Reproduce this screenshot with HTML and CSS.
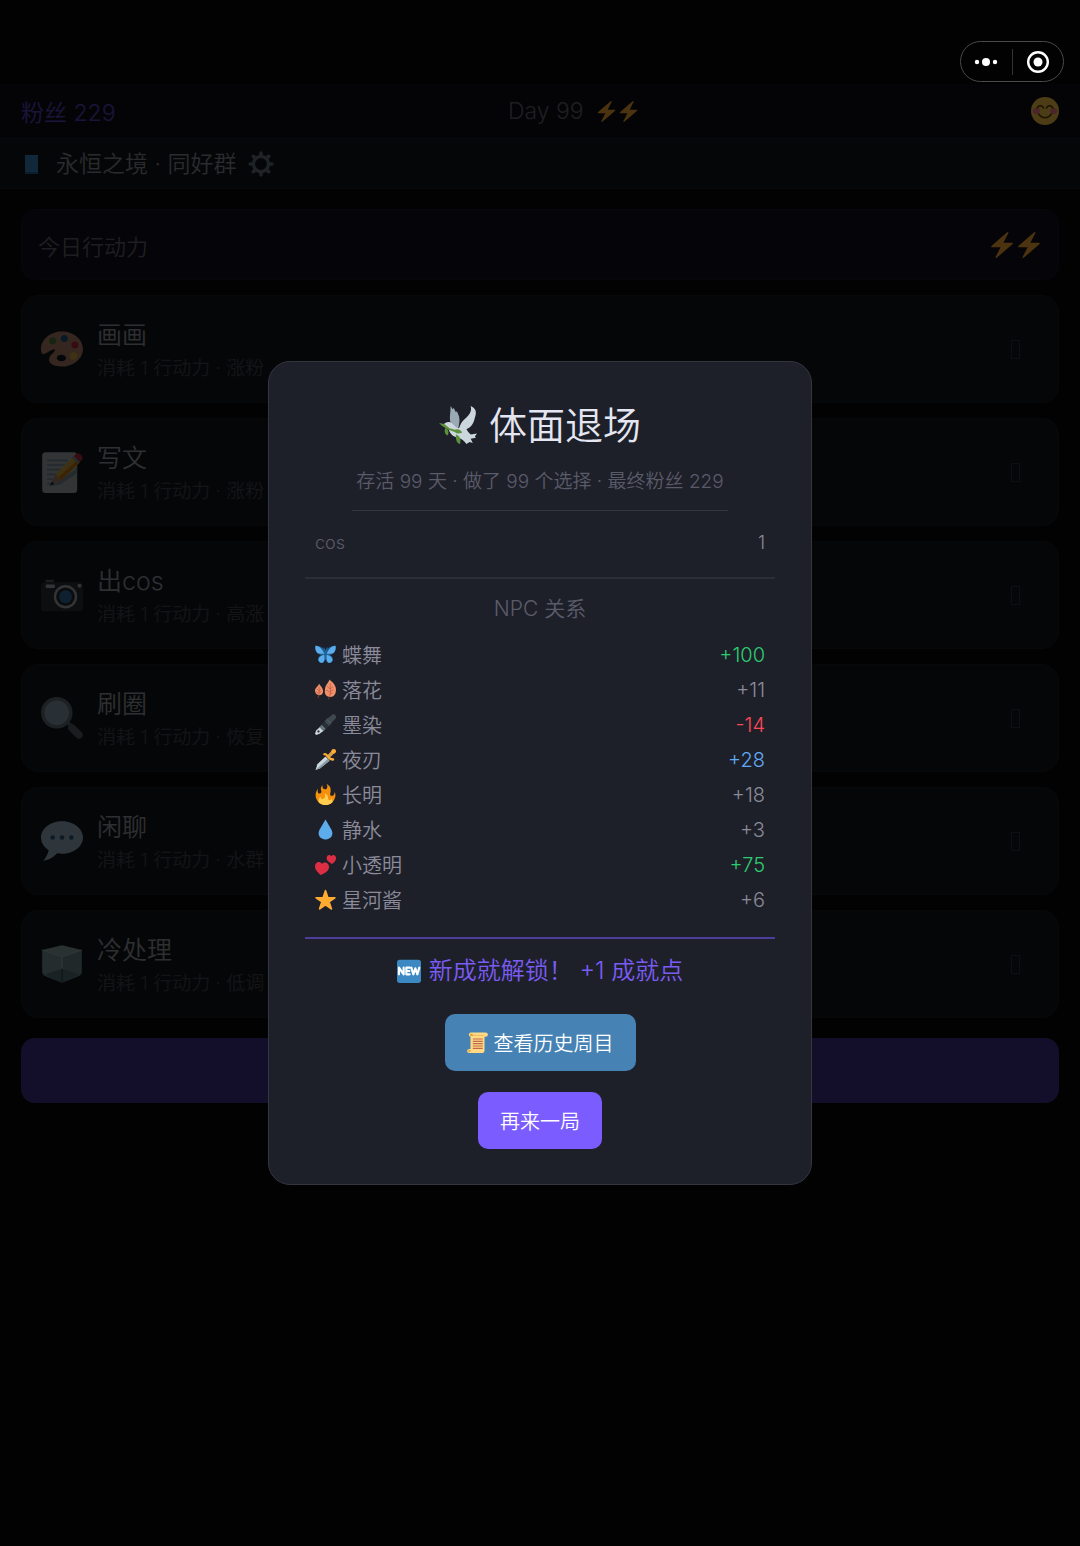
FILE: index.html
```html
<!DOCTYPE html>
<html lang="zh-CN">
<head>
<meta charset="utf-8">
<meta name="viewport" content="width=device-width, initial-scale=1">
<title>体面退场</title>
<link rel="stylesheet" href="styles.css">
</head>
<body>
<svg class="sprite" aria-hidden="true">
  <symbol id="bolt" viewBox="0 0 36 36"><path fill="#ffac33" d="M32.938 15.651C32.792 15.26 32.418 15 32 15H19.925L26.89 1.458c.219-.426.106-.947-.271-1.243C26.437.071 26.218 0 26 0c-.233 0-.466.082-.653.243L18 6.588 3.347 19.243c-.316.273-.43.714-.284 1.105S3.582 21 4 21h12.075L9.11 34.542c-.219.426-.106.947.271 1.243.182.144.401.215.619.215.233 0 .466-.082.653-.243L18 29.412l14.653-12.655c.317-.273.43-.714.285-1.106z"/></symbol>
  <symbol id="smile" viewBox="0 0 36 36"><circle cx="18" cy="18" r="18" fill="#ffcc4d"/><ellipse cx="7" cy="18" rx="4.500" ry="4" fill="#ff7892"/><ellipse cx="29" cy="18" rx="4.500" ry="4" fill="#ff7892"/><path d="M8 14c2-4 6-4 8 0M20 14c2-4 6-4 8 0M10 22c4 6 12 6 16 0" fill="none" stroke="#664500" stroke-width="2.200" stroke-linecap="round"/></symbol>
  <symbol id="gear" viewBox="0 0 36 36"><g fill="none" stroke="#66757f"><circle cx="18" cy="18" r="10.500" stroke-width="4.500"/><path stroke-width="5" stroke-linecap="round" d="M18 3v4M18 29v4M3 18h4M29 18h4M7.400 7.400l2.800 2.800M25.800 25.800l2.800 2.800M7.400 28.600l2.800-2.800M25.800 10.200l2.800-2.800"/></g></symbol>
  <symbol id="book" viewBox="0 0 24 24"><path fill="#3b88c3" d="M5 3h13v19H5z"/><path fill="#226699" d="M5 20h13v2H5z"/></symbol>
  <symbol id="palette" viewBox="0 0 36 36"><path fill="#d99e82" d="M18 3C8 3 0 10 0 18c0 2 .400 3.600 1.500 4.200C3.500 23 8 19 11 18.300c1.500-.300 1 1.500-.500 3-2 2-3.700 3.500-3.600 6.200C7.100 31 11.500 33 18 33c10 0 18-7 18-15S28 3 18 3zm-.500 25.600c-2.300 0-4-1.300-4-2.800 0-1.600 1.700-2.800 4-2.800s4 1.200 4 2.800c0 1.500-1.700 2.800-4 2.800z"/><circle cx="10" cy="11" r="3" fill="#5c913b"/><circle cx="20" cy="9" r="3" fill="#226699"/><circle cx="29" cy="14.500" r="3" fill="#dd2e44"/><circle cx="28" cy="24" r="3.200" fill="#ffcc4d"/></symbol>
  <symbol id="memo" viewBox="0 0 36 36"><rect x="1" y="1" width="30" height="35" rx="3" fill="#ccd6dd"/><path stroke="#88a9bf" stroke-width="1.500" d="M5 8h18M5 12h16M5 16h13M5 20h9M5 24h6M5 28h4"/><path fill="#99aab5" d="M9 30l19-13 3-3v5L16 29z"/><path fill="#ffcc4d" d="M12.500 20L27.500 5l5.500 5-16 15z"/><path fill="#f4900c" d="M15 22.500L31 8l2 2-16 15z"/><path fill="#d99e82" d="M12.500 20L8 29.500 17 25z"/><path fill="#292f33" d="M9.500 26L7.500 30l4-1.700z"/><path fill="#99aab5" d="M26.500 6l1.800-1.700 5.200 5L32 11z"/><path fill="#dd2e44" d="M28.300 4.300l2-2c2-1.500 6.500 2.500 5 5l-1.800 2z"/></symbol>
  <symbol id="camera" viewBox="0 0 36 36"><rect y="7" width="36" height="25" rx="3" fill="#31373d"/><path fill="#66757f" d="M4 5h7v2H4z"/><rect x="4" y="9" width="8" height="3" rx="1" fill="#ccd6dd"/><circle cx="33" cy="10" r="1.700" fill="#ccd6dd"/><circle cx="21" cy="19.500" r="10" fill="#ccd6dd"/><circle cx="21" cy="19.500" r="8" fill="#292f33"/><circle cx="21" cy="19.500" r="5.500" fill="#3b88c3"/></symbol>
  <symbol id="search" viewBox="0 0 36 36"><path stroke="#66757f" stroke-width="3" d="M22 21l4 4"/><path stroke="#66757f" stroke-width="6.500" stroke-linecap="round" d="M26.500 26.500l6 6"/><circle cx="13.500" cy="13.500" r="12" fill="#a4c4dc" stroke="#78858f" stroke-width="3"/></symbol>
  <symbol id="speech" viewBox="0 0 36 36"><path fill="#bdddf4" d="M18 1C8.059 1 0 7.268 0 15c0 4.368 2.574 8.268 6.604 10.835C6.080 28.144 4.859 31.569 2 35c5.758-.960 9.439-3.761 11.716-6.416 1.376.262 2.805.416 4.284.416 9.941 0 18-6.268 18-14S27.941 1 18 1z"/><g fill="#2a6797"><circle cx="10" cy="15" r="2"/><circle cx="18" cy="15" r="2"/><circle cx="26" cy="15" r="2"/></g></symbol>
  <symbol id="ice" viewBox="0 0 36 36"><path fill="#a8c6c8" d="M1 6l17-4 17 4-17 6z"/><path fill="#92b3b5" d="M1 6l17 6v22L3 28c-1.500-1-2-2-2-3.500z"/><path fill="#84a5a8" d="M35 6l-17 6v22l15-6c1.500-1 2-2 2-3.500z"/><path fill="#628b93" d="M3 27l15-5 15 5-15 7z"/><path fill="none" stroke="#c6dfe0" d="M1 6l17 6 17-6M18 12v10"/><path stroke="#31555c" d="M18 22v12"/></symbol>
  <symbol id="dove" viewBox="0 0 36 36"><path fill="#99aab5" d="M11 0l2 3 1-1 2 4 1-1 2 5c1 4 0 8-1 12l-6-4C9 13 11 8 11 0z"/><path fill="#ccd6dd" d="M30 0c5 2 6 6 4 11-1 5-3 9-8 11 1 2 3 4 4 5l6-1-2 3 1 1-5 1 2 4-3-1-3 2c-2-3-4-5-8-6-5-1-8-4-9-9l-5-3c2-3 6-4 9-1 2 2 4 4 6 4 2-6 4-7 7-10 4-4 5-7 4-11z"/><path fill="#5c913b" d="M0 16l5 1 5 4 7 2-1 2-8-3-5-3zM6 21c3 1 4 4 2 7-3-2-3-5-2-7zM14 23c3-2 6-1 8 2-4 2-7 1-8-2zM16 27c4 1 5 5 4 9-4-1-4-5-4-9z"/></symbol>
  <symbol id="butterfly" viewBox="0 0 36 36"><path fill="#1c6399" d="M18 14C15 7 8 2 1 3c-2 2-1 9 3 13 2 2 5 2 7 3-5 2-7 7-5 10 2 4 5 4 8 3 3-2 4-6 4-9 0 3 1 7 4 9 3 1 6 1 8-3 2-3 0-8-5-10 2-1 5-1 7-3 4-4 5-11 3-13-7-1-14 4-17 11z"/><path fill="#5dadec" d="M16 17C13 9 8 4 1 3c-1 4 0 9 3 12 4 3 8 1 12 2zM20 17c3-8 8-13 15-14 1 4 0 9-3 12-4 3-8 1-12 2zM16 19c-5 0-10 4-10 9 1 3 4 5 7 4 3-2 4-7 3-13zM20 19c5 0 10 4 10 9-1 3-4 5-7 4-3-2-4-7-3-13z"/><path stroke="#226699" stroke-width="2" stroke-linecap="round" d="M18 12v14M18 14l-3-7M18 14l3-7"/></symbol>
  <symbol id="leaves" viewBox="0 0 36 36"><path fill="#f19069" d="M25 1c2 3 10 7 11 16 0 9-3 13-10 14-8-1-10-6-9-12 0-8 5-11 8-18zM7 8c2 4 6 6 7 12 0 5-3 8-7 8-4-1-7-4-7-8 0-5 5-7 7-12z"/><path fill="none" stroke="#a8503f" d="M26 7c1 11 1 20-3 28M26 17l5-4M26 22l6-4M25 26l5-2M26 17l-5-4M25 22l-6-3M7 13c1 8 0 13-2 20M7 20l3-3M7 24l4-3M7 20l-4-3M6 24l-4-2"/></symbol>
  <symbol id="pen" viewBox="0 0 36 36"><path fill="#66757f" d="M12 18l7 7-6 6-7-7z"/><path fill="#292f33" d="M18 11l8 8-7 7-8-8z"/><path fill="#3e484f" d="M30 1c3-2 8 3 6 6L25 19l-8-8z"/><path stroke="#66757f" d="M17 12l8 8M20 9l8 8"/><path fill="#ccd6dd" d="M8 23l6 6-6 5-6 2-2-2 2-6z"/><circle cx="6" cy="30" r="2" fill="#31373d"/></symbol>
  <symbol id="dagger" viewBox="0 0 36 36"><path fill="#ccd6dd" d="M18 13l7 7L9 33l-8 3 3-10z"/><path fill="#8899a6" d="M25 20L9 33l-8 3 21-19z"/><path stroke="#d99e46" stroke-width="6" stroke-linecap="round" d="M25 11l7-7"/><path stroke="#ffac33" stroke-width="4" stroke-linecap="round" d="M16 9c3-1 3 0 6 4s5 5 9 5"/><circle cx="32" cy="4" r="4" fill="#ffac33"/></symbol>
  <symbol id="fire" viewBox="0 0 36 36"><path fill="#f4900c" d="M35 19c0-2.062-.367-4.039-1.040-5.868-.460 5.389-3.333 8.157-6.335 6.868-2.812-1.208-.917-5.917-.777-8.164.236-3.809-.012-8.169-6.931-11.794 2.875 5.500.333 8.917-2.333 9.125-2.958.231-5.667-2.542-4.667-7.042-3.238 2.386-3.332 6.402-2.333 9 1.042 2.708-.042 4.958-2.583 5.208-2.840.280-4.418-3.041-2.963-8.333C2.520 10.965 1 14.805 1 19c0 9.389 7.611 17 17 17s17-7.611 17-17z"/><path fill="#ffcc4d" d="M28.394 23.999c.148 3.084-2.561 4.293-4.019 3.709-2.106-.843-1.541-2.291-2.083-5.291s-2.625-5.083-5.708-6c2.250 6.333-1.247 8.667-3.080 9.084-1.872.426-3.753-.001-3.968-4.007C7.352 23.668 6 26.676 6 30c0 .368.023.730.055 1.090C9.125 34.124 13.342 36 18 36s8.875-1.876 11.945-4.910c.032-.360.055-.722.055-1.090 0-2.187-.584-4.236-1.606-6.001z"/></symbol>
  <symbol id="drop" viewBox="0 0 36 36"><path fill="#5dadec" d="M18 1L8 18C3 27 9 35 18 35s15-8 10-17z"/></symbol>
  <symbol id="hearts" viewBox="0 0 36 36"><path fill="#dd2e44" d="M9.500 36C5 31 0 28 0 21c0-7 8-10 12-4 5-5 13-1 12 6-1 7-8 10-14.500 13zM29 17c-5-3-9-5-9-10 0-5 5-7 8-3 3-5 9-1 8 4-1 4-3 7-7 9z"/></symbol>
  <symbol id="star" viewBox="0 0 36 36"><path fill="#ffac33" stroke="#ffac33" stroke-width="3" stroke-linejoin="round" d="M18 3l4 12h12l-10 7 4 12-10-7-10 7 4-12-10-7h12z"/></symbol>
  <symbol id="new" viewBox="0 0 36 36"><rect y="1" width="36" height="35" rx="4" fill="#3b88c3"/><path fill="none" stroke="#fff" stroke-width="3.200" stroke-linejoin="round" stroke-linecap="round" d="M3 23V13l7 10V13M19 13h-5v10h5M14 18h4.500M21.500 13l3 10 3-9 3 9 3-10"/></symbol>
  <symbol id="scroll" viewBox="0 0 36 36"><path fill="#ffd983" d="M7 1h25c5 0 5 7 0 7h-2v24c0 3-2 4-5 4H4c-5 0-5-7 0-7h2V8C2 7 2 2 7 1z"/><path fill="#e39f3d" d="M7 3c-3 1-2 4 1 4h21V6H9c2 0 1-4-2-3zM4 31c-3 0-2 3 0 3s3-1 2-3z"/><path stroke="#c1694f" stroke-width="2" d="M10 12h17M10 16h17M10 20h17M10 24h17M10 28h17"/></symbol>
</svg>

<div class="app">
  <header class="status">
    <span class="fans">粉丝 229</span>
    <span class="day">Day 99 <span class="bolts"><svg class="icon-s"><use href="#bolt"/></svg><svg class="icon-s"><use href="#bolt"/></svg></span></span>
    <span class="mood"><svg class="icon-l"><use href="#smile"/></svg></span>
  </header>
  <nav class="group">
    <svg class="icon-m"><use href="#book"/></svg>
    <span>永恒之境 · 同好群</span>
    <svg class="icon-g"><use href="#gear"/></svg>
  </nav>
  <main class="content">
    <section class="energy">
      <span>今日行动力</span>
      <span class="bolts"><svg class="icon-g"><use href="#bolt"/></svg><svg class="icon-g"><use href="#bolt"/></svg></span>
    </section>
    <button class="action" type="button"><svg class="icon-xl"><use href="#palette"/></svg><span class="label"><span class="name">画画</span><span class="cost">消耗 1 行动力 · 涨粉</span></span><span class="arrow"></span></button>
    <button class="action" type="button"><svg class="icon-xl"><use href="#memo"/></svg><span class="label"><span class="name">写文</span><span class="cost">消耗 1 行动力 · 涨粉</span></span><span class="arrow"></span></button>
    <button class="action" type="button"><svg class="icon-xl"><use href="#camera"/></svg><span class="label"><span class="name">出cos</span><span class="cost">消耗 1 行动力 · 高涨</span></span><span class="arrow"></span></button>
    <button class="action" type="button"><svg class="icon-xl"><use href="#search"/></svg><span class="label"><span class="name">刷圈</span><span class="cost">消耗 1 行动力 · 恢复</span></span><span class="arrow"></span></button>
    <button class="action" type="button"><svg class="icon-xl"><use href="#speech"/></svg><span class="label"><span class="name">闲聊</span><span class="cost">消耗 1 行动力 · 水群</span></span><span class="arrow"></span></button>
    <button class="action" type="button"><svg class="icon-xl"><use href="#ice"/></svg><span class="label"><span class="name">冷处理</span><span class="cost">消耗 1 行动力 · 低调</span></span><span class="arrow"></span></button>
    <button class="next" type="button" aria-label="下一天"></button>
  </main>
</div>

<div class="overlay">
  <section class="modal" role="dialog" aria-labelledby="ending">
    <h1 class="title" id="ending"><svg class="icon-t"><use href="#dove"/></svg>体面退场</h1>
    <p class="summary">存活 99 天 · 做了 99 个选择 · 最终粉丝 229</p>
    <dl class="stats">
      <div class="stat"><dt>cos</dt><dd>1</dd></div>
    </dl>
    <h2 class="subtitle">NPC 关系</h2>
    <dl class="npcs">
      <div class="npc"><dt><svg class="icon-s"><use href="#butterfly"/></svg>蝶舞</dt><dd class="good">+100</dd></div>
      <div class="npc"><dt><svg class="icon-s"><use href="#leaves"/></svg>落花</dt><dd>+11</dd></div>
      <div class="npc"><dt><svg class="icon-s"><use href="#pen"/></svg>墨染</dt><dd class="bad">-14</dd></div>
      <div class="npc"><dt><svg class="icon-s"><use href="#dagger"/></svg>夜刃</dt><dd class="warm">+28</dd></div>
      <div class="npc"><dt><svg class="icon-s"><use href="#fire"/></svg>长明</dt><dd>+18</dd></div>
      <div class="npc"><dt><svg class="icon-s"><use href="#drop"/></svg>静水</dt><dd>+3</dd></div>
      <div class="npc"><dt><svg class="icon-s"><use href="#hearts"/></svg>小透明</dt><dd class="good">+75</dd></div>
      <div class="npc"><dt><svg class="icon-s"><use href="#star"/></svg>星河酱</dt><dd>+6</dd></div>
    </dl>
    <p class="unlock"><svg class="icon-m"><use href="#new"/></svg><span>新成就解锁！ +1 成就点</span></p>
    <button class="btn history" type="button"><svg class="icon-s"><use href="#scroll"/></svg>查看历史周目</button>
    <button class="btn again" type="button">再来一局</button>
  </section>
</div>

<div class="capsule">
  <button type="button" aria-label="更多"><svg viewBox="0 0 24 24"><g fill="#fff"><circle cx="3" cy="12" r="2.200"/><circle cx="12" cy="12" r="4"/><circle cx="21" cy="12" r="2.200"/></g></svg></button>
  <button type="button" aria-label="关闭"><svg viewBox="0 0 24 24"><circle cx="12" cy="12" r="9.800" fill="none" stroke="#fff" stroke-width="2.400"/><circle cx="12" cy="12" r="4.500" fill="#fff"/></svg></button>
</div>
</body>
</html>
```
FILE: styles.css
```css
* {
  box-sizing: border-box;
}

body {
  margin: 0;
  min-height: 100vh;
  background: #07070a;
  color: #a0a3ad;
  font-family: Inter, "Noto Sans CJK SC", sans-serif;
  font-size: 21px;
  font-weight: 350;
}

h1, h2, p, dl, dd {
  margin: 0;
  font-weight: inherit;
}

button {
  border: 0;
  padding: 0;
  font: inherit;
  color: inherit;
  background: none;
  cursor: pointer;
}

svg {
  display: block;
  flex: none;
}

.sprite {
  position: absolute;
  width: 0;
  height: 0;
}

.icon-s { width: 21px; height: 21px; }
.icon-m { width: 24px; height: 24px; }
.icon-g { width: 26px; height: 26px; }
.icon-l { width: 28px; height: 28px; }
.icon-t { width: 38px; height: 38px; }
.icon-xl { width: 42px; height: 42px; }

/* Game screen */

.app {
  padding-top: 84px;
}

.status {
  display: flex;
  align-items: center;
  justify-content: space-between;
  height: 55px;
  padding: 0 21px;
  border-bottom: 1px solid #20222c;
  background: #0f0f18;
  font-size: 23px;
}

.fans {
  color: #5d44c4;
}

.day {
  display: flex;
  align-items: center;
  gap: 12px;
  color: #65666e;
}

.bolts {
  display: flex;
  gap: 1px;
}

.group {
  display: flex;
  align-items: center;
  gap: 12px;
  height: 50px;
  padding: 0 20px;
  border-bottom: 1px solid #1b1f26;
  background: #11151b;
  color: #8e9096;
  font-size: 23px;
  line-height: 26px;
}

.content {
  display: flex;
  flex-direction: column;
  gap: 15px;
  padding: 20px 21px;
}

.energy {
  display: flex;
  align-items: center;
  justify-content: space-between;
  height: 71px;
  padding: 0 16px;
  border: 1px solid #181526;
  border-radius: 14px;
  background: #120f1c;
  color: #65666e;
  font-size: 22px;
}

.action {
  display: flex;
  align-items: center;
  gap: 14px;
  height: 108px;
  padding: 0 38px 0 19px;
  border: 1px solid #1a1d22;
  border-radius: 17px;
  background: #13171c;
  text-align: left;
}

.action .icon-xl {
  opacity: 0.8;
}

.label {
  display: flex;
  flex: 1;
  flex-direction: column;
  padding-top: 3px;
}

.name {
  color: #9c9da2;
  font-size: 25px;
  line-height: 36px;
}

.cost {
  color: #43454d;
  font-size: 19px;
  line-height: 32px;
}

.arrow {
  width: 9px;
  height: 19px;
  border: 1px solid #353541;
}

.next {
  height: 65px;
  margin-top: 5px;
  border-radius: 14px;
  background: #40308c;
}

/* Ending dialog */

.overlay {
  position: fixed;
  inset: 0;
  display: flex;
  align-items: center;
  justify-content: center;
  padding: 24px;
  background: rgba(0, 0, 0, 0.7);
}

.modal {
  display: flex;
  flex-direction: column;
  align-items: center;
  width: 100%;
  max-width: 544px;
  padding: 36px 36px 35px;
  border: 1px solid #34363f;
  border-radius: 22px;
  background: #1e2029;
}

.title {
  display: flex;
  align-items: center;
  gap: 12px;
  color: #e4e7f2;
  font-size: 38px;
  line-height: 54px;
}

.summary {
  margin-top: 16px;
  padding: 0 4px 14px;
  border-bottom: 1px solid #34363f;
  color: #5a5b69;
  font-size: 19px;
  line-height: 28px;
}

.stats,
.npcs {
  align-self: stretch;
}

.stats {
  padding: 14px 10px 17px;
  border-bottom: 2px solid #2c2e37;
}

.stat,
.npc {
  display: flex;
  align-items: center;
  justify-content: space-between;
  height: 35px;
}

.stat {
  color: #5a5b69;
  font-size: 18px;
}

.stat dd {
  color: #8b8b9b;
}

.subtitle {
  margin: 16px 0 14px;
  color: #5a5b69;
  font-size: 21px;
  line-height: 28px;
}

.npcs {
  padding: 0 10px 20px;
  border-bottom: 2px solid #4b3f9b;
}

.npc {
  color: #8b8b9b;
  font-size: 20px;
}

.npc dt {
  display: flex;
  align-items: center;
  gap: 6px;
}

.npc .good { color: #2ecc71; }
.npc .bad { color: #ff4757; }
.npc .warm { color: #60a9f6; }

.unlock {
  display: flex;
  align-items: center;
  gap: 8px;
  margin: 16px 0 27px;
  color: #7a5cf5;
  font-size: 24px;
  line-height: 32px;
}

.btn {
  display: flex;
  align-items: center;
  gap: 6px;
  height: 57px;
  padding: 0 22px;
  border-radius: 10px;
  color: #fff;
  font-size: 20px;
}

.history {
  margin-bottom: 21px;
  background: #4682b4;
}

.again {
  background: #7b5cff;
}

/* Host app capsule */

.capsule {
  position: fixed;
  top: 41px;
  right: 16px;
  display: flex;
  align-items: center;
  width: 104px;
  height: 41px;
  border: 1px solid #4a4a4a;
  border-radius: 21px;
}

.capsule button {
  display: flex;
  flex: 1;
  align-items: center;
  justify-content: center;
  height: 26px;
}

.capsule button + button {
  border-left: 1px solid #333;
}

.capsule svg {
  width: 24px;
  height: 24px;
}
```
